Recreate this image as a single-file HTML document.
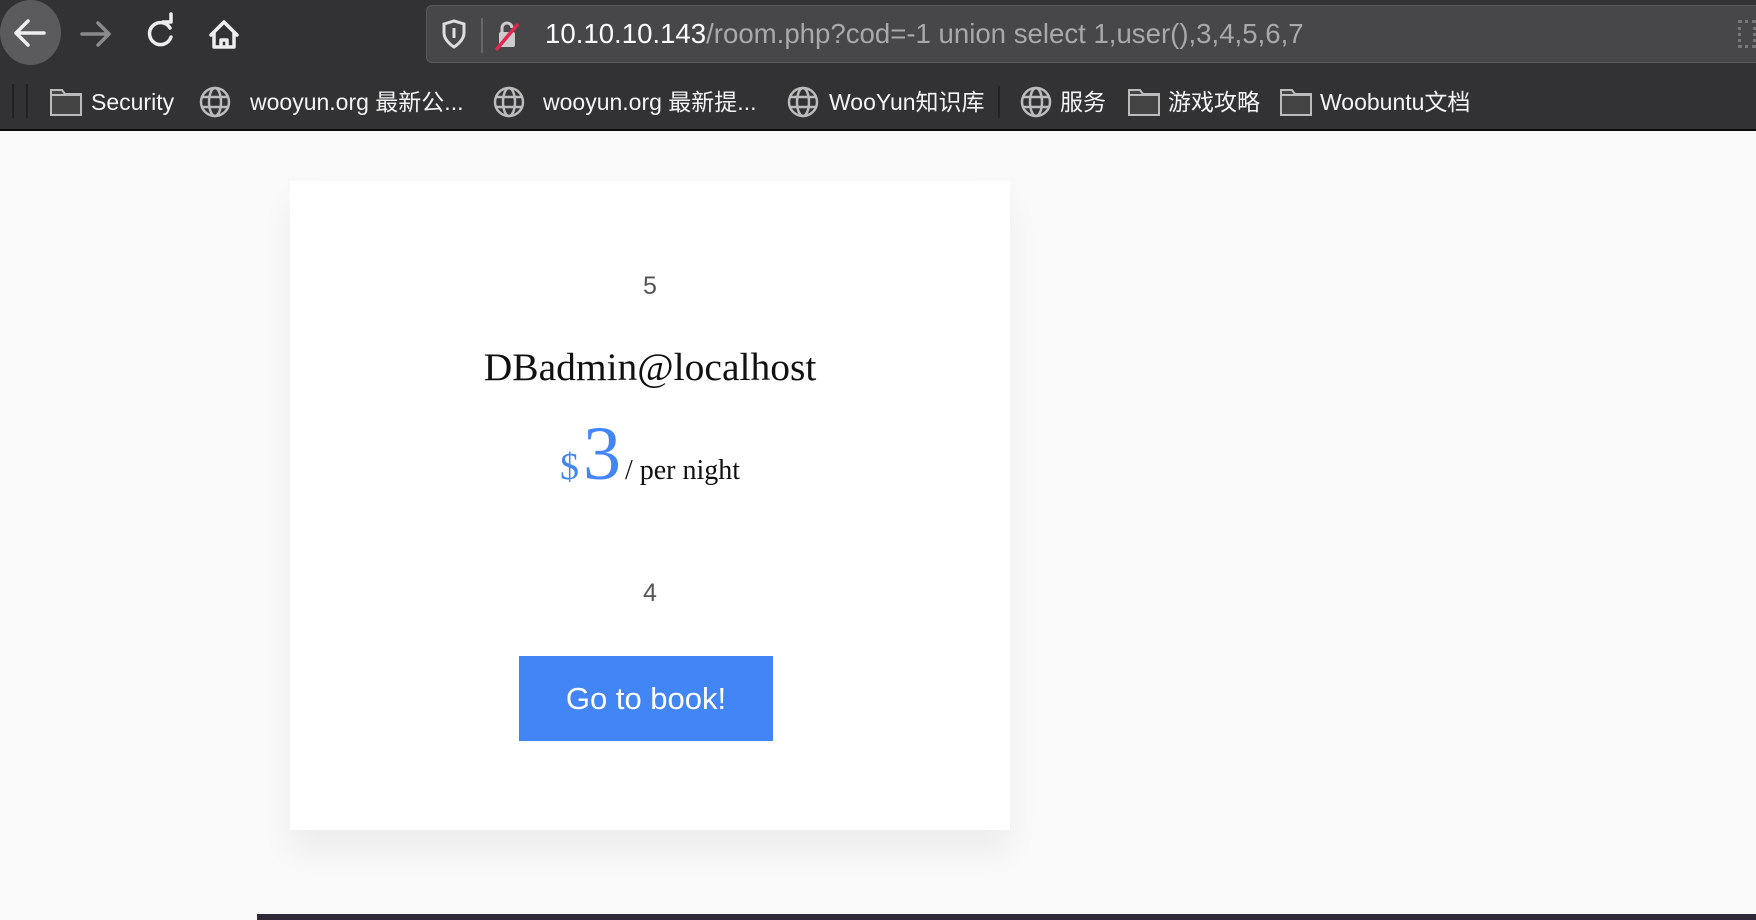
<!DOCTYPE html>
<html><head><meta charset="utf-8"><style>
*{margin:0;padding:0;box-sizing:border-box}
body{width:1756px;height:920px;background:#f9f9f9;position:relative;overflow:hidden;font-family:"Liberation Sans","Noto Sans CJK SC",sans-serif}
#tb{position:absolute;left:0;top:0;width:1756px;height:131px;background:#323234;border-bottom:2px solid #0c0c0d}
.a{position:absolute}
#url{left:426px;top:5px;width:1340px;height:58px;background:#474749;border-radius:6px;border:1px solid #5a5a5c}
.bm{position:absolute;top:87px;color:#f4f4f4;font-size:23px;line-height:30px;white-space:nowrap}
#card{left:290px;top:181px;width:720px;height:649px;background:#fff;box-shadow:0 22px 30px rgba(0,0,0,0.05)}
.c{position:absolute;left:0;width:720px;text-align:center}
</style></head><body>
<div id="tb">
  <div class="a" style="left:0;top:0;width:61px;height:65px;border-radius:50%;background:#5b5b5d"></div>
  <svg class="a" style="left:0;top:0" width="280" height="66" viewBox="0 0 280 66" fill="none" stroke-linecap="round" stroke-linejoin="round">
    <path d="M16 33H44M16 33L28 21M16 33L28 45" stroke="#eee" stroke-width="3.5"/>
    <path d="M82 34H109M109 34L98 23M109 34L98 45" stroke="#8a8a8c" stroke-width="3.5"/>
    <path d="M170 28A11 11 0 1 0 171 37" stroke="#eee" stroke-width="3.5"/>
    <path d="M163 22H171V14" stroke="#eee" stroke-width="3.5"/>
    <path d="M211 35L224 22L237 35M214 32V47H234V32M221 47V40H227V47" stroke="#eee" stroke-width="3.5"/>
  </svg>
  <div id="url" class="a"></div>
  <svg class="a" style="left:440px;top:18px" width="80" height="36" viewBox="0 0 80 36" fill="none">
    <path d="M4 6L14 3L24 6V15C24 23 14 29 14 29C14 29 4 23 4 15Z" stroke="#ddd" stroke-width="3"/>
    <path d="M14 10V20" stroke="#ddd" stroke-width="3"/>
    <line x1="42" y1="0" x2="42" y2="35" stroke="#666" stroke-width="2"/>
    <rect x="59" y="14" width="16" height="15" rx="2" fill="#ccc"/>
    <path d="M62 14V10A5 5 0 0 1 72 10" stroke="#ccc" stroke-width="3"/>
    <line x1="56" y1="32" x2="78" y2="6" stroke="#e22850" stroke-width="3.5"/>
  </svg>
  <div class="a" style="left:545px;top:17px;font-size:27.6px;line-height:34px;color:#fbfbfe;white-space:nowrap">10.10.10.143<span style="color:#a9a9ab">/room.php?cod=-1 union select 1,user(),3,4,5,6,7</span></div>
  <div class="a" style="left:1738px;top:20px;width:18px;height:28px;border:3px dotted #777"></div>
  <div class="a" style="left:12px;top:84px;width:2px;height:34px;background:#222"></div>
  <div class="a" style="left:26px;top:84px;width:2px;height:34px;background:#222"></div>
  <svg class="a" style="left:0;top:84px" width="1450" height="36" viewBox="0 0 1450 36" fill="none" stroke="#bbb" stroke-width="2">
    <path d="M51 6H62L65 10H81V31H51Z" fill="#444"/><path d="M51 11H81"/>
    <g><circle cx="215" cy="18" r="14" stroke-width="2.5"/><ellipse cx="215" cy="18" rx="6" ry="14" stroke-width="2.5"/><path d="M201 13H229M201 23H229" stroke-width="2.5"/></g>
    <g transform="translate(294 0)"><circle cx="215" cy="18" r="14" stroke-width="2.5"/><ellipse cx="215" cy="18" rx="6" ry="14" stroke-width="2.5"/><path d="M201 13H229M201 23H229" stroke-width="2.5"/></g>
    <g transform="translate(588 0)"><circle cx="215" cy="18" r="14" stroke-width="2.5"/><ellipse cx="215" cy="18" rx="6" ry="14" stroke-width="2.5"/><path d="M201 13H229M201 23H229" stroke-width="2.5"/></g>
    <path d="M999 2V34" stroke="#222"/>
    <g transform="translate(821 0)"><circle cx="215" cy="18" r="14" stroke-width="2.5"/><ellipse cx="215" cy="18" rx="6" ry="14" stroke-width="2.5"/><path d="M201 13H229M201 23H229" stroke-width="2.5"/></g>
    <path d="M1129 6H1140L1143 10H1159V31H1129Z" fill="#444"/><path d="M1129 11H1159"/>
    <path d="M1281 6H1292L1295 10H1311V31H1281Z" fill="#444"/><path d="M1281 11H1311"/>
  </svg>
  <div class="bm" style="left:91px">Security</div>
  <div class="bm" style="left:250px">wooyun.org 最新公...</div>
  <div class="bm" style="left:543px">wooyun.org 最新提...</div>
  <div class="bm" style="left:829px">WooYun知识库</div>
  <div class="bm" style="left:1060px">服务</div>
  <div class="bm" style="left:1168px">游戏攻略</div>
  <div class="bm" style="left:1320px">Woobuntu文档</div>
</div>
<div id="card" class="a">
  <div class="c" style="top:89px;font-size:25px;line-height:32px;color:#555">5</div>
  <div class="c" style="top:163px;font-family:'Liberation Serif',serif;font-size:39.5px;line-height:46px;color:#111">DBadmin@localhost</div>
  <div class="c" style="top:233px;font-family:'Liberation Serif',serif;color:#111;white-space:nowrap"><span style="color:#4285f4;font-size:38px">$</span> <span style="color:#4285f4;font-size:76px;line-height:80px">3</span> <span style="font-size:28px">/ per night</span></div>
  <div class="c" style="top:396px;font-size:25px;line-height:32px;color:#555">4</div>
  <div class="a" style="left:229px;top:475px;width:254px;height:85px;background:#4285f4;color:#fff;font-size:31px;line-height:85px;text-align:center">Go to book!</div>
</div>
<div class="a" style="left:257px;top:914px;width:1499px;height:6px;background:#2e2838"></div>
</body></html>
